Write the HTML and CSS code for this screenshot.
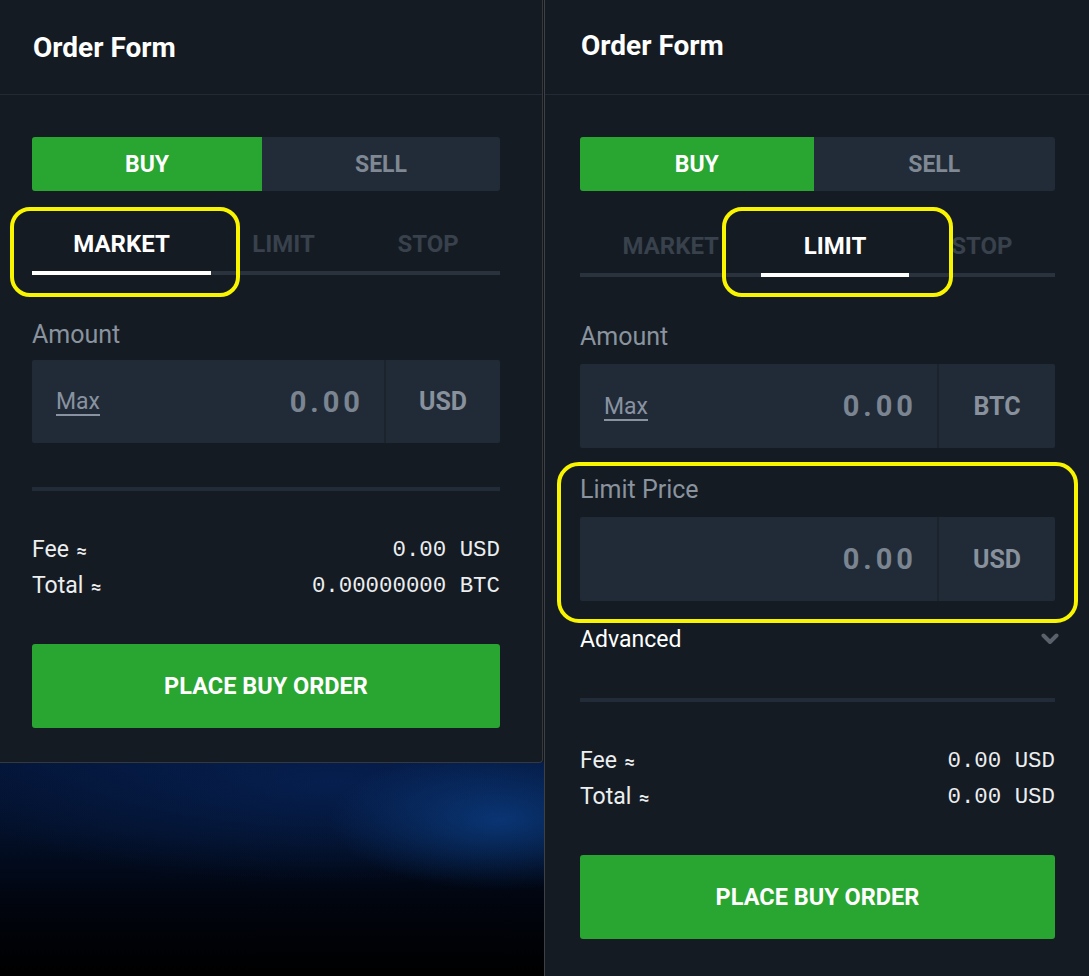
FILE: index.html
```html
<!DOCTYPE html>
<html lang="en">
<head>
<meta charset="utf-8">
<title>Order Form</title>
<link rel="stylesheet" href="styles.css">
</head>
<body>
<div class="page">
  <div class="left-col">
    <section class="panel panel-left">
      <header class="panel-head"><h2>Order Form</h2></header>
      <div class="panel-body">
        <div class="toggle">
          <button class="side buy">BUY</button>
          <button class="side sell">SELL</button>
        </div>
        <div class="tabs">
          <span class="tab active">MARKET</span>
          <span class="tab">LIMIT</span>
          <span class="tab">STOP</span>
        </div>
        <label class="field-label">Amount</label>
        <div class="input">
          <div class="input-main"><span class="max">Max</span><span class="val">0.00</span></div>
          <span class="unit">USD</span>
        </div>
        <div class="sep"></div>
        <div class="summary">
          <div class="row"><span>Fee <span class="approx">≈</span></span><span class="mono">0.00 USD</span></div>
          <div class="row"><span>Total <span class="approx">≈</span></span><span class="mono">0.00000000 BTC</span></div>
        </div>
        <button class="place">PLACE BUY ORDER</button>
      </div>
    </section>
  </div>

  <section class="panel panel-right">
    <header class="panel-head"><h2>Order Form</h2></header>
    <div class="panel-body">
      <div class="toggle">
        <button class="side buy">BUY</button>
        <button class="side sell">SELL</button>
      </div>
      <div class="tabs">
        <span class="tab">MARKET</span>
        <span class="tab active">LIMIT</span>
        <span class="tab">STOP</span>
      </div>
      <label class="field-label">Amount</label>
      <div class="input">
        <div class="input-main"><span class="max">Max</span><span class="val">0.00</span></div>
        <span class="unit">BTC</span>
      </div>
      <label class="field-label field-label-second">Limit Price</label>
      <div class="input">
        <div class="input-main input-main-end"><span class="val">0.00</span></div>
        <span class="unit">USD</span>
      </div>
      <div class="adv">
        <span>Advanced</span>
        <svg class="chev" width="18" height="12" viewBox="0 0 18 12"><polyline points="2.5,2.5 9,9 15.5,2.5" fill="none" stroke="#5a616a" stroke-width="4" stroke-linecap="round" stroke-linejoin="round"/></svg>
      </div>
      <div class="sep"></div>
      <div class="summary">
        <div class="row"><span>Fee <span class="approx">≈</span></span><span class="mono">0.00 USD</span></div>
        <div class="row"><span>Total <span class="approx">≈</span></span><span class="mono">0.00 USD</span></div>
      </div>
      <button class="place">PLACE BUY ORDER</button>
    </div>
  </section>

  <div class="callout callout-market"></div>
  <div class="callout callout-limit"></div>
  <div class="callout callout-price"></div>
</div>
</body>
</html>
```

FILE: styles.css
```css
* {
  box-sizing: border-box;
  margin: 0;
  padding: 0;
}

body {
  width: 1089px;
  height: 976px;
  overflow: hidden;
  background: #000;
  font-family: Roboto, "Noto Sans", sans-serif;
  color: #e9ebee;
}

button {
  border: 0;
  font: inherit;
  cursor: pointer;
}

.page {
  position: relative;
  display: flex;
  height: 976px;
}

.left-col {
  width: 544px;
  flex: none;
  background:
    linear-gradient(to bottom, #121519 0, #121519 762px, transparent 762px),
    radial-gradient(ellipse 170px 70px at 500px 820px, rgba(12, 66, 140, 0.7), rgba(12, 66, 140, 0) 100%),
    radial-gradient(ellipse 380px 100px at 330px 785px, rgba(8, 40, 100, 0.55), rgba(8, 40, 100, 0) 100%),
    linear-gradient(to bottom, #041538 762px, #031029 830px, #01050f 900px, #000 976px);
}

.panel {
  background: #141b23;
}

.panel-left {
  width: 543px;
  border-right: 1px solid #35393e;
  border-bottom: 1px solid #35393e;
  border-bottom-right-radius: 4px;
}

.panel-right {
  flex: 1;
  border-left: 1px solid #3d4045;
}

.panel-head {
  height: 95px;
  border-bottom: 1px solid #232a33;
  display: flex;
  align-items: center;
  padding-left: 33px;
}

.panel-right .panel-head {
  padding-left: 36px;
  padding-bottom: 3px;
}

.panel-head h2 {
  font-size: 28px;
  font-weight: 700;
  color: #fff;
}

.panel-body {
  padding: 42px 42px 34px 32px;
}

.panel-right .panel-body {
  padding: 42px 34px 36px 35px;
}

.toggle {
  display: flex;
  height: 54px;
  background: #222c38;
  border-radius: 3px;
}

.side {
  flex: 1 1 auto;
  display: flex;
  align-items: center;
  justify-content: center;
  font-size: 23px;
  font-weight: 700;
  color: #7f8893;
  background: transparent;
}

.side.buy {
  background: #29a531;
  color: #fff;
  border-radius: 3px 0 0 3px;
}

.tabs {
  display: flex;
  margin-top: 20px;
  border-bottom: 4px solid #2a323d;
}

.panel-right .tabs {
  margin-top: 22px;
}

.tab {
  flex: 1 1 auto;
  text-align: center;
  font-size: 24px;
  line-height: 24px;
  font-weight: 700;
  padding: 21px 0 15px;
  color: #38414c;
  border-bottom: 4px solid transparent;
  margin-bottom: -4px;
}

.tab.active {
  color: #fff;
  border-bottom-color: #fff;
}

.field-label {
  display: block;
  margin-top: 48px;
  font-size: 25px;
  line-height: 24px;
  color: #8a939e;
}

.field-label-second {
  margin-top: 30px;
}

.input {
  margin-top: 13px;
  height: 83px;
  display: flex;
  background: #212b37;
  border-radius: 2px;
}

.panel-right .input {
  margin-top: 15px;
  height: 84px;
}

.input-main {
  flex: 1;
  display: flex;
  align-items: center;
  justify-content: space-between;
  padding: 0 20px 0 24px;
}

.input-main-end {
  justify-content: flex-end;
}

.max {
  font-size: 23px;
  color: #8892a0;
  text-decoration: underline;
  text-underline-offset: 5px;
  text-decoration-thickness: 2px;
}

.val {
  font-size: 29px;
  font-weight: 700;
  letter-spacing: 4px;
  color: #7b8591;
}

.unit {
  width: 116px;
  flex: none;
  border-left: 2px solid #1b232d;
  display: flex;
  align-items: center;
  justify-content: center;
  font-size: 25px;
  font-weight: 700;
  color: #88919c;
}

.panel-right .unit {
  width: 118px;
}

.adv {
  display: flex;
  justify-content: space-between;
  align-items: center;
  margin-top: 26px;
  height: 24px;
  font-size: 23px;
  color: #fff;
}

.chev {
  margin-right: -4px;
}

.sep {
  height: 4px;
  background: #222c38;
  margin-top: 44px;
}

.panel-right .sep {
  margin-top: 47px;
}

.summary {
  margin-top: 41px;
}

.row {
  display: flex;
  justify-content: space-between;
  height: 36px;
  line-height: 36px;
  font-size: 23px;
  color: #eceef0;
}

.approx {
  font-size: 18px;
  font-weight: 700;
  margin-left: 2px;
}

.mono {
  font-family: "Liberation Mono", monospace;
  font-size: 22.4px;
}

.place {
  margin-top: 40px;
  width: 100%;
  height: 84px;
  background: #29a531;
  border-radius: 3px;
  color: #fff;
  font-size: 23.5px;
  font-weight: 700;
  display: flex;
  align-items: center;
  justify-content: center;
}

.callout {
  position: absolute;
  border: 4px solid #f9f400;
  border-radius: 20px;
  pointer-events: none;
}

.callout-market {
  left: 10px;
  top: 207px;
  width: 230px;
  height: 90px;
}

.callout-limit {
  left: 722px;
  top: 207px;
  width: 231px;
  height: 90px;
}

.callout-price {
  left: 557px;
  top: 462px;
  width: 521px;
  height: 161px;
  border-radius: 22px;
}
```
